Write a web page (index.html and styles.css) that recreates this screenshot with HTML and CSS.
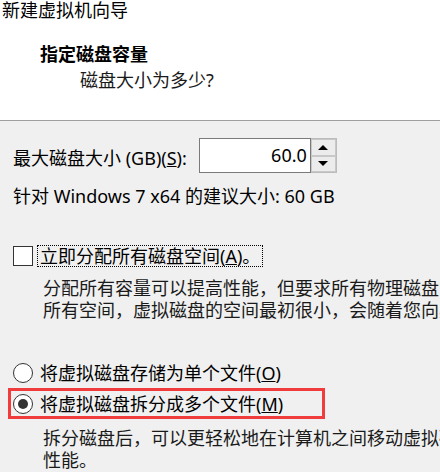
FILE: index.html
```html
<!DOCTYPE html>
<html lang="zh-CN">
<head>
<meta charset="utf-8">
<link rel="stylesheet" href="styles.css">
</head>
<body>
<div class="window">
  <div class="header">
    <div class="title">新建虚拟机向导</div>
    <div class="heading">指定磁盘容量</div>
    <div class="sub">磁盘大小为多少?</div>
  </div>
  <div class="content">
    <div class="size-row">
      <span class="label">最大磁盘大小 (GB)(<u>S</u>):</span>
      <div class="spin">
        <div class="spin-input">60.0</div>
        <div class="spin-btns">
          <div class="spin-btn"><span class="tri-up"></span></div>
          <div class="spin-btn"><span class="tri-down"></span></div>
        </div>
      </div>
    </div>
    <div class="hint">针对 Windows 7 x64 的建议大小: 60 GB</div>
    <div class="check-row">
      <span class="checkbox"></span>
      <span class="focus-label">立即分配所有磁盘空间(<u>A</u>)。</span>
    </div>
    <div class="desc desc-first">
      <div>分配所有容量可以提高性能，但要求所有物理磁盘空间立即可用。</div>
      <div>所有空间，虚拟磁盘的空间最初很小，会随着您向其中添加数据而不断变大。</div>
    </div>
    <div class="radio-row radio-first">
      <span class="radio"></span>
      <span class="opt">将虚拟磁盘存储为单个文件(<u>O</u>)</span>
    </div>
    <div class="radio-row radio-marked">
      <span class="radio checked"></span>
      <span class="opt">将虚拟磁盘拆分成多个文件(<u>M</u>)</span>
    </div>
    <div class="desc desc-last">
      <div>拆分磁盘后，可以更轻松地在计算机之间移动虚拟磁盘，但可能会降低大容量磁盘的</div>
      <div>性能。</div>
    </div>
  </div>
</div>
</body>
</html>
```

FILE: styles.css
```css
html, body {
  margin: 0;
  padding: 0;
}
body {
  width: 440px;
  height: 472px;
  overflow: hidden;
  background: #f0f0f0;
  font-family: "Noto Sans", "Noto Sans CJK SC", sans-serif;
  font-size: 18px;
  color: #000;
}
.window {
  width: 440px;
  height: 472px;
  overflow: hidden;
}
.header {
  height: 120px;
  background: #fff;
  border-bottom: 1px solid #a0a0a0;
  overflow: hidden;
}
.title {
  line-height: 18px;
  padding-left: 2px;
  padding-top: 1px;
}
.heading {
  line-height: 18px;
  margin-top: 26px;
  padding-left: 40px;
  font-weight: bold;
}
.sub {
  line-height: 18px;
  margin-top: 8px;
  padding-left: 80px;
  color: #1a1a1a;
}
.content {
  display: flex;
  flex-direction: column;
}
.size-row {
  display: flex;
  align-items: center;
  margin-top: 17px;
  padding-left: 13px;
  height: 35px;
}
.label {
  line-height: 22px;
  padding-top: 4px;
}
.spin {
  display: flex;
  margin-left: 12px;
  height: 35px;
}
.spin-input {
  width: 112px;
  height: 35px;
  box-sizing: border-box;
  border: 1px solid #7a7a7a;
  background: #fff;
  text-align: right;
  padding-right: 3px;
  line-height: 33px;
}
.spin-btns {
  width: 26px;
  display: flex;
  flex-direction: column;
  box-sizing: border-box;
  border: 1px solid #bcbcbc;
  border-left: none;
  background: #e9e9e9;
}
.spin-btn {
  flex: 1;
  display: flex;
  align-items: center;
  justify-content: center;
  border: 1px solid #c8c8c8;
  background: #ececec;
}
.tri-up {
  width: 0;
  height: 0;
  border-left: 5px solid transparent;
  border-right: 5px solid transparent;
  border-bottom: 5px solid #000;
}
.tri-down {
  width: 0;
  height: 0;
  border-left: 5px solid transparent;
  border-right: 5px solid transparent;
  border-top: 5px solid #000;
}
.hint {
  margin-top: 12px;
  padding-left: 13px;
  line-height: 22px;
  white-space: nowrap;
}
.check-row {
  display: flex;
  align-items: center;
  margin-top: 38px;
  padding-left: 13px;
  height: 22px;
}
.checkbox {
  width: 20px;
  height: 20px;
  box-sizing: border-box;
  border: 1.5px solid #333;
  background: #fff;
}
.focus-label {
  margin-left: 4px;
  border: 1px dotted #000;
  padding: 0 2px;
  line-height: 20px;
  white-space: nowrap;
}
.desc {
  padding-left: 43px;
  line-height: 22px;
  white-space: nowrap;
  overflow: hidden;
  color: #1a1a1a;
}
.desc-first {
  margin-top: 10px;
}
.desc-last {
  margin-top: 8px;
}
.radio-row {
  display: flex;
  align-items: center;
  white-space: nowrap;
}
.radio-first {
  margin-top: 41px;
  padding-left: 13px;
  height: 22px;
}
.radio-marked {
  margin-top: 4px;
  margin-left: 8px;
  width: 317px;
  height: 31px;
  box-sizing: border-box;
  border: 3px solid #f03c3c;
  padding-left: 2px;
}
.radio {
  width: 20px;
  height: 20px;
  box-sizing: border-box;
  border: 1.5px solid #333;
  border-radius: 50%;
  background: #fff;
  display: flex;
  align-items: center;
  justify-content: center;
  flex: none;
}
.radio.checked::after {
  content: "";
  width: 10px;
  height: 10px;
  border-radius: 50%;
  background: #333;
}
.opt {
  margin-left: 7px;
  line-height: 22px;
}
```
